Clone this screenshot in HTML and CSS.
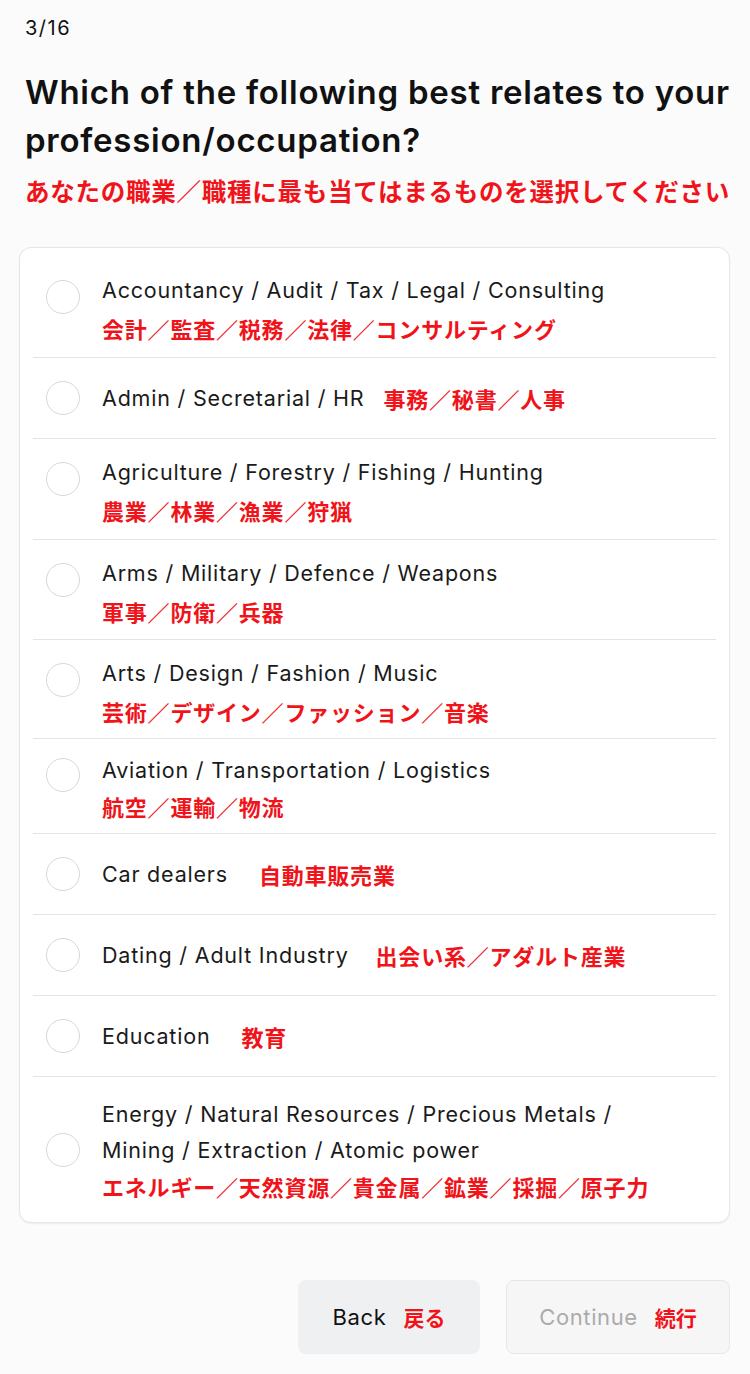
FILE: index.html
```html
<!DOCTYPE html>
<html lang="en">
<head>
<meta charset="utf-8">
<title>Occupation</title>
<link rel="stylesheet" href="styles.css">
</head>
<body>
<main class="page">
  <div class="step">3/16</div>
  <h1 class="title">Which of the following best relates to your profession/occupation?</h1>
  <p class="title-jp">あなたの職業／職種に最も当てはまるものを選択してください</p>

  <div class="card">
    <div class="row two"><span class="radio"></span><div class="label"><div class="en">Accountancy / Audit / Tax / Legal / Consulting</div><div class="jp">会計／監査／税務／法律／コンサルティング</div></div></div>
    <div class="row"><span class="radio"></span><div class="label inline gap-s"><span class="en">Admin / Secretarial / HR</span><span class="jp">事務／秘書／人事</span></div></div>
    <div class="row two"><span class="radio"></span><div class="label"><div class="en">Agriculture / Forestry / Fishing / Hunting</div><div class="jp">農業／林業／漁業／狩猟</div></div></div>
    <div class="row two pb9"><span class="radio"></span><div class="label"><div class="en">Arms / Military / Defence / Weapons</div><div class="jp">軍事／防衛／兵器</div></div></div>
    <div class="row two pb8"><span class="radio"></span><div class="label"><div class="en">Arts / Design / Fashion / Music</div><div class="jp">芸術／デザイン／ファッション／音楽</div></div></div>
    <div class="row two tight"><span class="radio"></span><div class="label"><div class="en">Aviation / Transportation / Logistics</div><div class="jp">航空／運輸／物流</div></div></div>
    <div class="row"><span class="radio"></span><div class="label inline gap-l"><span class="en">Car dealers</span><span class="jp">自動車販売業</span></div></div>
    <div class="row"><span class="radio"></span><div class="label inline gap-m"><span class="en">Dating / Adult Industry</span><span class="jp">出会い系／アダルト産業</span></div></div>
    <div class="row"><span class="radio"></span><div class="label inline gap-l"><span class="en">Education</span><span class="jp">教育</span></div></div>
    <div class="row three"><span class="radio"></span><div class="label"><div class="en">Energy / Natural Resources / Precious Metals /<br>Mining / Extraction / Atomic power</div><div class="jp">エネルギー／天然資源／貴金属／鉱業／採掘／原子力</div></div></div>
  </div>

  <div class="actions">
    <button class="btn btn-back">Back <span class="jp">戻る</span></button>
    <button class="btn btn-continue">Continue <span class="jp">続行</span></button>
  </div>
</main>
</body>
</html>
```

FILE: styles.css
```css
* { box-sizing: border-box; }
html, body { margin: 0; padding: 0; background: #fbfbfb; }
body {
  font-family: "Inter", "Noto Sans CJK JP", sans-serif;
  color: #111;
}
.page { padding: 14px 20px 0 19px; }
.step {
  font-size: 20px;
  line-height: 28px;
  letter-spacing: 1.5px;
  margin-left: 6px;
  color: #111;
}
.title {
  margin: 26px 0 0 6px;
  font-size: 33px;
  line-height: 48px;
  font-weight: 600;
  letter-spacing: 0.75px;
  color: #111;
}
.title-jp {
  margin: 9px 0 0 6px;
  font-family: "Noto Sans CJK JP", sans-serif;
  font-size: 24.5px;
  line-height: 36px;
  font-weight: 700;
  letter-spacing: 0.75px;
  color: #f0141a;
  white-space: nowrap;
}
.card {
  margin-top: 38px;
  background: #fff;
  border: 1px solid #e6e6e6;
  border-radius: 12px;
  padding: 9px 13px 7px;
  box-shadow: 0 1px 2px rgba(0,0,0,0.06);
}
.row {
  display: flex;
  align-items: center;
  min-height: 81px;
  border-bottom: 1px solid #e4e4e4;
}
.row:last-child { border-bottom: none; }
.row.two { align-items: flex-start; padding: 15px 0 10px; }
.row.two .radio { margin-top: 8px; }
.row.pb9 { padding-bottom: 9px; }
.row.pb8 { padding-bottom: 8px; }
.row.tight { padding: 13px 0 9px; }
.row.tight .en, .row.tight .jp { line-height: 36px; }
.row.tight .radio { margin-top: 6px; }
.row.three { align-items: flex-start; padding: 19px 0 10px; }
.row.three .en { line-height: 36px; }
.row.three .jp { line-height: 37px; }
.row.three .radio { margin-top: 37px; }
.radio {
  flex: none;
  width: 34px;
  height: 34px;
  border-radius: 50%;
  border: 1.5px solid #d8d8d8;
  background: #fff;
  margin: 0 22px 0 13px;
}
.label {
  font-size: 21.5px;
  line-height: 37px;
  letter-spacing: 0.8px;
}
.label .en { color: #1a1a1a; }
.label .jp {
  display: block;
  font-family: "Noto Sans CJK JP", sans-serif;
  font-weight: 700;
  font-size: 22px;
  line-height: 38px;
  letter-spacing: 0.8px;
  color: #f0141a;
}
.label.inline { display: flex; align-items: center; gap: 26px; }
.label.gap-s { gap: 19px; }
.label.gap-m { gap: 27px; }
.label.gap-l { gap: 31px; }
.actions {
  display: flex;
  justify-content: flex-end;
  gap: 26px;
  margin-top: 57px;
}
.btn {
  font-family: "Inter", "Noto Sans CJK JP", sans-serif;
  font-size: 22px;
  letter-spacing: 0.6px;
  height: 74px;
  border-radius: 8px;
  border: 1px solid transparent;
  display: flex;
  align-items: center;
  justify-content: center;
  gap: 17px;
  padding: 0;
}
.btn .jp {
  font-family: "Noto Sans CJK JP", sans-serif;
  font-weight: 700;
  color: #f0141a;
  font-size: 21px;
  letter-spacing: 0;
}
.btn-back { width: 182px; background: #eff0f2; color: #111; }
.btn-continue { width: 224px; background: #f6f6f7; border-color: #e6e6e6; color: #ababab; }
```
